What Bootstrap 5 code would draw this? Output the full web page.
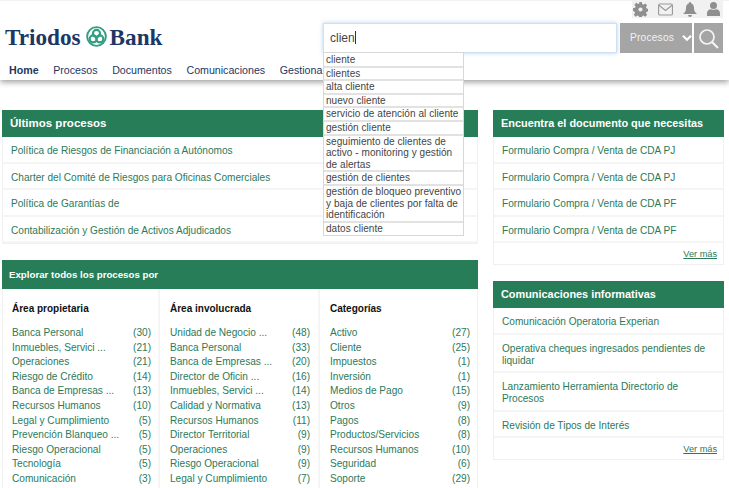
<!DOCTYPE html>
<html lang="es">
<head>
<meta charset="utf-8">
<title>Triodos Bank</title>
<link href="https://cdn.jsdelivr.net/npm/bootstrap@5.3.0/dist/css/bootstrap.min.css" rel="stylesheet">
<style>
html,body{height:488px;overflow:hidden;background:#fff;}
body{font-family:"Liberation Sans",Arial,sans-serif;font-size:11px;color:#333;}
a{text-decoration:none;}
.site-head{height:80px;position:relative;background:#fff;box-shadow:0 2px 6px rgba(0,0,0,.4);border-top:1px solid #f2f2f2;}
.head-top{height:18px;padding-right:6px;}
.tool-strip{background:#f1f1f1;height:18px;width:91px;margin-top:-1px;padding:0 3px 0 1px;}
.brand-mark{font-family:"Liberation Serif",serif;font-weight:700;font-size:23.2px;color:#1c3764;line-height:26px;margin-left:5px;margin-top:-3px;}
.brand-glyph{margin:0 3px 0 5px;}
.head-mid{height:30px;margin-top:4px;}
.search-wrap{margin-left:auto;margin-right:6px;}
.search-field{width:294px;height:30px;border:1px solid #cfe0ef;box-shadow:0 0 4px rgba(102,160,220,.5);padding:0 6px;font-size:12px;line-height:28px;color:#444;}
.caret-bar{display:inline-block;width:1px;height:13px;background:#333;vertical-align:-2px;}
.scope-btn{width:72px;height:30px;background:#a5a5a5;color:#f2f2f2;margin-left:3px;font-size:10.2px;letter-spacing:.2px;padding:0 0 0 10px;}
.go-btn{width:29px;height:30px;background:#a5a5a5;margin-left:2px;}
.main-nav{padding-left:9px;margin-top:10px;gap:14.6px;font-size:10.65px;line-height:14px;white-space:nowrap;}
.main-nav a{color:#1c3764;}
.main-nav a.on{font-weight:700;}
.suggest{position:absolute;left:323px;top:52px;width:141px;padding-top:1px;background:#fff;border:1px solid #d8d8d8;z-index:5;font-size:10px;letter-spacing:.06px;line-height:11.6px;color:#444;}
.suggest div{padding:0 0 0 2px;border-bottom:2px solid #e2e2e2;}
.suggest div:last-child{border-bottom:0;padding-bottom:1px;}
.page-body{padding:30px 5px 0 2px;gap:15px;}
.col-left{width:476px;flex:none;}
.col-right{width:231px;flex:none;}
.green-box{border:1px solid #f0f0f0;background:#fff;}
.green-cap{background:#277d57;color:#fff;font-weight:700;font-size:11.5px;height:27px;line-height:27px;padding-left:8px;margin:-1px -1px 0;}
.col-right .green-cap{font-size:10.9px;}
.doc-row{display:block;color:#2b7a5a;font-size:10.1px;line-height:12px;padding:8px 9px 4.5px 8px;border-bottom:2px solid #f5f5f5;}
.more-row{text-align:right;padding:5px 6px 4px;font-size:9.2px;line-height:12px;}
.more-row a{color:#2b7a5a;text-decoration:underline;}
.explore{margin-top:16px;}
.explore .green-cap{height:29px;line-height:29px;font-size:9.7px;padding-left:7px;}
.facet{padding:13px 7px 0 10px;border-right:2px solid #f5f5f5;height:210px;flex:0 0 157px;}
.facet:first-child{padding-left:9px;}
.facet:nth-child(2){flex-basis:160px;padding-right:8px;}
.facet:last-child{border-right:0;}
.facet-head{color:#111;font-weight:700;font-size:10px;line-height:14px;margin-bottom:10px;}
.facet-row{display:flex;justify-content:space-between;color:#2b7a5a;font-size:10.1px;line-height:14.6px;white-space:nowrap;}
.rt-second{margin-top:16px;}
</style>
</head>
<body>
<header class="site-head">
  <div class="head-top d-flex justify-content-end">
    <div class="tool-strip d-flex align-items-center justify-content-between">
      <svg width="15" height="15" viewBox="0 0 16 16" fill="#8f8f8f"><path d="M6.6 0h2.8l.4 2.2 1.4.6 1.900-1.300 2 2-1.300 1.900.6 1.400 2.100.4v2.800l-2.100.4-.6 1.400 1.300 1.900-2 2-1.900-1.300-1.400.6-.4 2.200H6.600l-.4-2.200-1.400-.6-1.900 1.300-2-2 1.300-1.900-.6-1.400L0 9.400V6.600l2.200-.4.6-1.400L1.500 2.900l2-2 1.900 1.300 1.400-.6z"/><circle cx="8" cy="8" r="2.200" fill="#f1f1f1"/></svg>
      <svg width="15" height="13" viewBox="0 0 16 13" fill="none" stroke="#9a9a9a" stroke-width="1.2"><rect x=".6" y=".6" width="14.8" height="11.8" rx="1.5"/><path d="M1 2l7 5.500L15 2"/></svg>
      <svg width="14" height="15" viewBox="0 0 14 15" fill="#8f8f8f"><path d="M7 0a1 1 0 0 1 1 1.200C10.300 2 11 4 11 6c0 3 1 4.500 3 6H0c2-1.500 3-3 3-6 0-2 .7-4 3-4.800A1 1 0 0 1 7 0z"/><path d="M5 13h4a2 2 0 0 1-4 0z"/></svg>
      <svg width="13" height="14" viewBox="0 0 13 14" fill="#8f8f8f"><circle cx="6.500" cy="3.500" r="3.500"/><path d="M0 14v-3c0-2.500 2-3.500 4-3.800 1.500.8 3.500.8 5 0 2 .3 4 1.300 4 3.800v3z"/></svg>
    </div>
  </div>
  <div class="head-mid d-flex align-items-center">
    <div class="brand-mark d-flex align-items-center"><span>Triodos</span>
      <svg class="brand-glyph" width="21" height="21" viewBox="0 0 22 22" fill="none" stroke="#2f9f7f"><circle cx="11" cy="11" r="9.800" stroke-width="2"/><circle cx="11" cy="7.800" r="3.700" stroke-width="2.200"/><circle cx="7.500" cy="13.500" r="3.700" stroke-width="2.200"/><circle cx="14.500" cy="13.500" r="3.700" stroke-width="2.200"/></svg>
      <span>Bank</span></div>
    <div class="search-wrap d-flex">
      <div class="search-field">clien<span class="caret-bar"></span></div>
      <div class="scope-btn d-flex align-items-center">Procesos
        <svg class="ms-2" width="10" height="8" viewBox="0 0 11 8" fill="none" stroke="#fff" stroke-width="2.400"><path d="M1 1.500l4.500 4.500L10 1.500"/></svg>
      </div>
      <div class="go-btn d-flex align-items-center justify-content-center">
        <svg width="21" height="21" viewBox="0 0 21 21" fill="none" stroke="#f4f4f4" stroke-width="1.700"><circle cx="9" cy="9" r="7"/><path d="M14 14l6 6" stroke-width="2.200"/></svg>
      </div>
    </div>
  </div>
  <nav class="main-nav d-flex">
    <a class="on" href="#">Home</a><a href="#">Procesos</a><a href="#">Documentos</a><a href="#">Comunicaciones</a><a href="#">Gestiona</a>
  </nav>
</header>
<div class="suggest">
  <div>cliente</div><div>clientes</div><div>alta cliente</div><div>nuevo cliente</div><div>servicio de atención al cliente</div><div>gestión cliente</div><div>seguimiento de clientes de activo - monitoring y gestión de alertas</div><div>gestión de clientes</div><div>gestión de bloqueo preventivo y baja de clientes por falta de identificación</div><div>datos cliente</div>
</div>
<main class="page-body d-flex">
  <div class="col-left">
    <section class="green-box">
      <div class="green-cap">Últimos procesos</div>
      <a class="doc-row" href="#">Política de Riesgos de Financiación a Autónomos</a>
      <a class="doc-row" href="#">Charter del Comité de Riesgos para Oficinas Comerciales</a>
      <a class="doc-row" href="#">Política de Garantías de</a>
      <a class="doc-row" href="#">Contabilización y Gestión de Activos Adjudicados</a>
    </section>
    <section class="green-box explore">
      <div class="green-cap">Explorar todos los procesos por</div>
      <div class="d-flex">
        <div class="facet">
          <div class="facet-head">Área propietaria</div>
          <div class="facet-row"><span>Banca Personal</span><span>(30)</span></div>
          <div class="facet-row"><span>Inmuebles, Servici ...</span><span>(21)</span></div>
          <div class="facet-row"><span>Operaciones</span><span>(21)</span></div>
          <div class="facet-row"><span>Riesgo de Crédito</span><span>(14)</span></div>
          <div class="facet-row"><span>Banca de Empresas ...</span><span>(13)</span></div>
          <div class="facet-row"><span>Recursos Humanos</span><span>(10)</span></div>
          <div class="facet-row"><span>Legal y Cumplimiento</span><span>(5)</span></div>
          <div class="facet-row"><span>Prevención Blanqueo ...</span><span>(5)</span></div>
          <div class="facet-row"><span>Riesgo Operacional</span><span>(5)</span></div>
          <div class="facet-row"><span>Tecnología</span><span>(5)</span></div>
          <div class="facet-row"><span>Comunicación</span><span>(3)</span></div>
        </div>
        <div class="facet">
          <div class="facet-head">Área involucrada</div>
          <div class="facet-row"><span>Unidad de Negocio ...</span><span>(48)</span></div>
          <div class="facet-row"><span>Banca Personal</span><span>(33)</span></div>
          <div class="facet-row"><span>Banca de Empresas ...</span><span>(20)</span></div>
          <div class="facet-row"><span>Director de Oficin ...</span><span>(16)</span></div>
          <div class="facet-row"><span>Inmuebles, Servici ...</span><span>(14)</span></div>
          <div class="facet-row"><span>Calidad y Normativa</span><span>(13)</span></div>
          <div class="facet-row"><span>Recursos Humanos</span><span>(11)</span></div>
          <div class="facet-row"><span>Director Territorial</span><span>(9)</span></div>
          <div class="facet-row"><span>Operaciones</span><span>(9)</span></div>
          <div class="facet-row"><span>Riesgo Operacional</span><span>(9)</span></div>
          <div class="facet-row"><span>Legal y Cumplimiento</span><span>(7)</span></div>
        </div>
        <div class="facet">
          <div class="facet-head">Categorías</div>
          <div class="facet-row"><span>Activo</span><span>(27)</span></div>
          <div class="facet-row"><span>Cliente</span><span>(25)</span></div>
          <div class="facet-row"><span>Impuestos</span><span>(1)</span></div>
          <div class="facet-row"><span>Inversión</span><span>(1)</span></div>
          <div class="facet-row"><span>Medios de Pago</span><span>(15)</span></div>
          <div class="facet-row"><span>Otros</span><span>(9)</span></div>
          <div class="facet-row"><span>Pagos</span><span>(8)</span></div>
          <div class="facet-row"><span>Productos/Servicios</span><span>(8)</span></div>
          <div class="facet-row"><span>Recursos Humanos</span><span>(10)</span></div>
          <div class="facet-row"><span>Seguridad</span><span>(6)</span></div>
          <div class="facet-row"><span>Soporte</span><span>(29)</span></div>
        </div>
      </div>
    </section>
  </div>
  <div class="col-right">
    <section class="green-box">
      <div class="green-cap">Encuentra el documento que necesitas</div>
      <a class="doc-row" href="#">Formulario Compra / Venta de CDA PJ</a>
      <a class="doc-row" href="#">Formulario Compra / Venta de CDA PJ</a>
      <a class="doc-row" href="#">Formulario Compra / Venta de CDA PF</a>
      <a class="doc-row" href="#">Formulario Compra / Venta de CDA PF</a>
      <div class="more-row"><a href="#">Ver más</a></div>
    </section>
    <section class="green-box rt-second">
      <div class="green-cap">Comunicaciones informativas</div>
      <a class="doc-row" href="#">Comunicación Operatoria Experian</a>
      <a class="doc-row" href="#">Operativa cheques ingresados pendientes de liquidar</a>
      <a class="doc-row" href="#">Lanzamiento Herramienta Directorio de Procesos</a>
      <a class="doc-row" href="#">Revisión de Tipos de Interés</a>
      <div class="more-row"><a href="#">Ver más</a></div>
    </section>
  </div>
</main>
<script src="https://cdn.jsdelivr.net/npm/bootstrap@5.3.0/dist/js/bootstrap.bundle.min.js"></script>
</body>
</html>
